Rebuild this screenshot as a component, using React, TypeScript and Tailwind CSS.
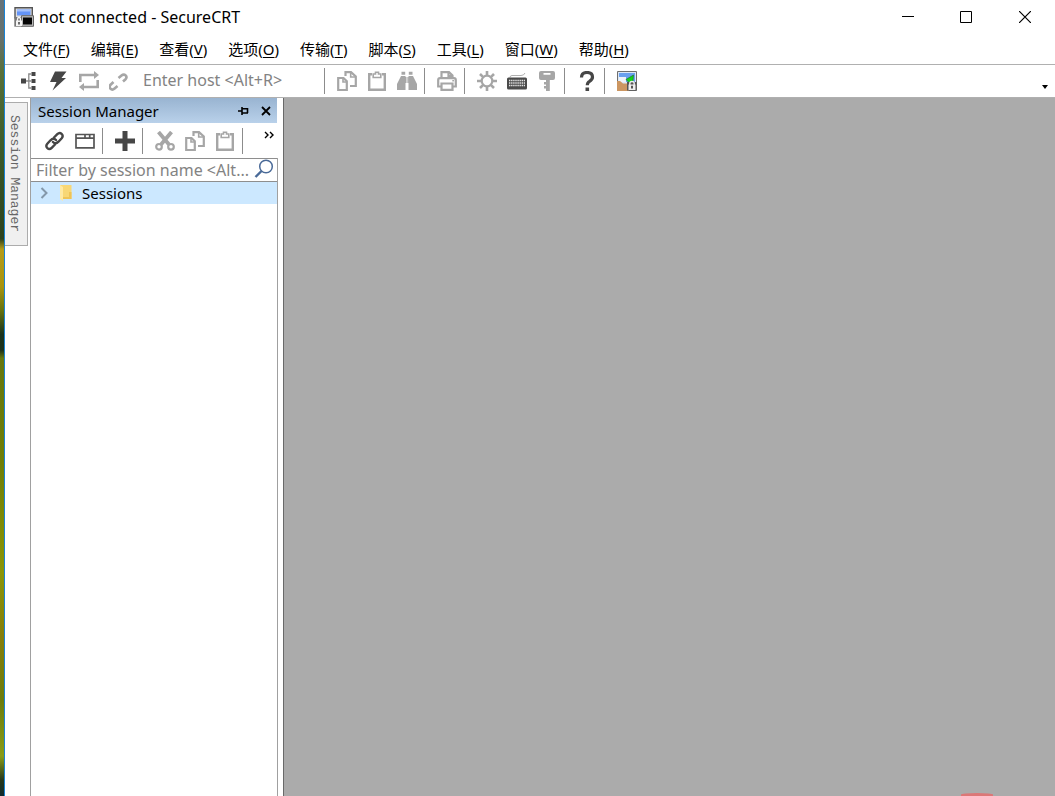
import React, { useState } from 'react'

interface ToolProps {
  label: string
  children: React.ReactNode
}

const menus = [
  { text: '文件', accel: 'F' },
  { text: '编辑', accel: 'E' },
  { text: '查看', accel: 'V' },
  { text: '选项', accel: 'O' },
  { text: '传输', accel: 'T' },
  { text: '脚本', accel: 'S' },
  { text: '工具', accel: 'L' },
  { text: '窗口', accel: 'W' },
  { text: '帮助', accel: 'H' },
]

function Tool({ label, children }: ToolProps) {
  return (
    <button type="button" aria-label={label} title={label} className="flex h-7 w-[30px] shrink-0 items-center justify-center hover:bg-sky-100">
      <svg viewBox="0 0 20 20" className="h-5 w-5">{children}</svg>
    </button>
  )
}

function Separator() {
  return <div className="ml-0.5 mr-[7px] h-[26px] w-px shrink-0 bg-[#8c8c8c]" />
}

function CopyPath() {
  return (
    <g fill="none" stroke="#a6a6a6" strokeWidth="2.200">
      <path d="M1.200 7h5.300l3.300 3.300V19H1.200z" />
      <path d="M6 7v4h4" strokeWidth="1.600" />
      <path d="M8.500 5V1.200H14l4.800 4.300V15H13" />
      <path d="M13.700 1v5H19" strokeWidth="1.600" />
    </g>
  )
}

function PastePath() {
  return (
    <g fill="none" stroke="#a6a6a6">
      <path d="M5 3.200H2.200v15.600h15.600V3.200H15" strokeWidth="2.400" />
      <path d="M6.200 6.500V3h2.300V1.200h3V3h2.300v3.500z" strokeWidth="1.600" />
    </g>
  )
}

function AppIcon() {
  return (
    <svg viewBox="0 0 20 20" className="h-5 w-5">
      <path d="M1 .7h17.300v10H1z" fill="#dcdcdc" stroke="#555" strokeWidth="1.400" />
      <path d="M3 2.500h13.500v6H3z" fill="#6494f7" />
      <path d="M3 2.500h13.500v2H3z" fill="#a5c1fa" />
      <path d="M.3 10h8v9.700h-8z" fill="#777" />
      <path d="M7.500 8.700h12v10.600h-12z" fill="#b9b9b9" stroke="#666" />
      <path d="M9 10.500h9v7H9z" fill="#050505" />
      <path d="M3.500 14v-2q0-1.500 1.500-1.500T6.500 12v2" fill="none" stroke="#f4f4f4" strokeWidth="1.300" />
      <path d="M2 13.500h6V19H2z" fill="#f4f4f4" />
      <path d="M4.300 15h1.400v2.500H4.300z" fill="#333" />
    </svg>
  )
}

function TitleBar() {
  return (
    <header className="flex h-[34px] items-center pl-[9px]">
      <AppIcon />
      <h1 className="ml-[5px] flex-1 text-base leading-5">not connected - SecureCRT</h1>
      <div className="flex">
        <button type="button" aria-label="最小化" className="flex h-8 w-[58px] items-center justify-center">
          <svg viewBox="0 0 12 12" className="h-3 w-3"><path d="M0 5.500h12" stroke="#000" shapeRendering="crispEdges" /></svg>
        </button>
        <button type="button" aria-label="最大化" className="flex h-8 w-[58px] items-center justify-center">
          <svg viewBox="0 0 12 12" className="h-3 w-3"><path d="M.5.5h11v11H.5z" fill="none" stroke="#000" /></svg>
        </button>
        <button type="button" aria-label="关闭" className="flex h-8 w-[60px] items-center justify-center">
          <svg viewBox="0 0 12 12" className="h-3 w-3"><path d="m0 0 12 12M12 0 0 12" stroke="#000" strokeWidth="1.200" /></svg>
        </button>
      </div>
    </header>
  )
}

function MenuBar() {
  return (
    <nav className="flex h-[30px] items-center gap-[21px] pl-[18px] text-[15px] leading-5">
      {menus.map((menu) => (
        <button key={menu.accel} type="button" className="whitespace-nowrap">
          {menu.text}(<span className="underline underline-offset-2">{menu.accel}</span>)
        </button>
      ))}
    </nav>
  )
}

function MainToolbar() {
  const [host, setHost] = useState('')

  return (
    <div className="flex h-[34px] items-center border-y border-[#b0b0b0] pl-[9px]">
      <Tool label="Connect">
        <path d="M2 7.500h5v5H2zM12.500 1h4v4h-4zM12.500 8h4v4h-4zM12.500 15h4v4h-4z" fill="#464646" />
        <path d="M7 10h5.500M12.500 3H9.800v14h2.700" fill="none" stroke="#8a8a8a" strokeWidth="1.300" />
      </Tool>
      <Tool label="Quick Connect">
        <path d="M6 .5h11.500L12.500 7H17L3.500 19.500 7.500 11H1z" fill="#464646" />
      </Tool>
      <Tool label="Reconnect">
        <path d="M1.300 11V4H16M18.700 9v7H4" fill="none" stroke="#a6a6a6" strokeWidth="2.600" />
        <path d="m15 0 5 4-5 4zM5 12l-5 4 5 4z" fill="#a6a6a6" />
      </Tool>
      <Tool label="Disconnect">
        <g fill="none" stroke="#a6a6a6" strokeWidth="2.600">
          <path d="M4.500 11 1.800 13.500c-3 3 .7 6.700 3.800 4L8.500 15" />
          <path d="m9.500 7 3-2.500c3-2.500 6.700 1 3.800 4L14 10.500" />
        </g>
      </Tool>
      <input
        aria-label="Enter host"
        value={host}
        onChange={(e) => setHost(e.target.value)}
        placeholder="Enter host <Alt+R>"
        className="ml-[9px] mb-0.5 h-6 w-[179px] text-base leading-5 outline-none placeholder:text-[#838383]"
      />
      <Separator />
      <Tool label="Copy"><CopyPath /></Tool>
      <Tool label="Paste"><PastePath /></Tool>
      <Tool label="Find">
        <path d="M4.500.8h3.700v3H4.500zM11.800.8h3.700v3h-3.700zM4 5h4.500v14H0v-6zM11.500 5H16l4 8v6h-8.500zM8.500 6h3v6h-3z" fill="#a6a6a6" />
        <path d="M9.500 6v6M10.700 6v6" stroke="#fff" strokeWidth=".5" />
      </Tool>
      <Separator />
      <Tool label="Print">
        <g fill="none" stroke="#a6a6a6" strokeWidth="2.200">
          <path d="M4.500 7V1.200H12l3.500 3.300V7M4 15.500H1.200V9q0-1.800 1.800-1.800h14q1.800 0 1.800 1.800v6.500H16" />
          <path d="M4.500 12.500h11v6.300h-11zM11.500 1v4h4" />
          <path d="M15.300 9.700h1.800" strokeWidth="1.500" />
        </g>
      </Tool>
      <Separator />
      <Tool label="Session Options">
        <circle cx="10" cy="10" r="5.300" fill="none" stroke="#a6a6a6" strokeWidth="2.200" />
        <path d="M10 0v4.500M10 15.500V20M0 10h4.500M15.500 10H20M3 3l3.200 3.200m7.600 7.600L17 17M3 17l3.200-3.200m7.600-7.600L17 3" stroke="#a6a6a6" strokeWidth="2.600" />
      </Tool>
      <Tool label="Keymap">
        <path d="M3 6.500Q3 4.500 5 4.500h9q3 0 4-2.500" fill="none" stroke="#b0b0b0" />
        <rect x="0" y="6.500" width="20" height="12" rx="1.500" fill="#4b4b4b" />
        <path d="M2 9.500h16M2 12h16M2 14.500h16" stroke="#e5e5e5" strokeWidth="1.500" strokeDasharray="1.400 .7" />
      </Tool>
      <Tool label="Public Key">
        <path fillRule="evenodd" d="M4 0h12q2 0 2 2v5q0 2-2 2h-3.200v11H9v-2.500H7V15h2v-1.500H7V11h2V9H4Q2 9 2 7V2q0-2 2-2zm2.500 2v1.800h7V2z" fill="#a6a6a6" />
      </Tool>
      <Separator />
      <Tool label="Help">
        <path d="M4.500 6.500q0-5 5.500-5t5.500 4.500q0 2.500-3 4.300-2.200 1.200-2.200 4" fill="none" stroke="#464646" strokeWidth="3.200" />
        <path d="M8.500 16.500h3.600V20H8.500z" fill="#464646" />
      </Tool>
      <Separator />
      <Tool label="SecureFX">
        <path d="M.5.500h19v19H.5z" fill="#dce7f5" stroke="#6f6f6f" />
        <path d="M2 2h16v9H2z" fill="#6aa0ee" />
        <path d="M2 6h7v5H2z" fill="#eef2f8" />
        <path d="M0 10h3l3 2.500h6V20H0z" fill="#cc9661" />
        <path d="M9 8.500 16.500 4l-.5 6-4 1.500z" fill="#16d41b" stroke="#176f22" strokeWidth=".6" />
        <path d="M10 11h9.500v8.500H10z" fill="#555" />
        <path d="M12.800 14v-1.500q0-2 2.200-2t2.200 2V14" fill="none" stroke="#eee" strokeWidth="1.400" />
        <path d="M11.500 13.500h7V19h-7z" fill="#eee" />
        <path d="M14 14.800h2v2.700h-2z" fill="#555" />
      </Tool>
      <button type="button" aria-label="Toolbar options" className="ml-auto mt-3 flex h-4 w-5 items-center justify-center">
        <svg viewBox="0 0 6 4" className="h-1 w-1.5"><path d="M0 0h6L3 4z" /></svg>
      </button>
    </div>
  )
}

function SessionManager() {
  const [filter, setFilter] = useState('')

  return (
    <aside className="flex w-[248px] shrink-0 flex-col border-l border-[#a0a0a0]">
      <div className="mr-px flex h-[25px] items-center bg-gradient-to-b from-[#99b4d1] to-[#b9d1ea] pl-[7px]">
        <h2 className="flex-1 text-[15px] leading-5">Session Manager</h2>
        <button type="button" aria-label="Auto Hide" className="flex h-5 w-[22px] items-center justify-center">
          <svg viewBox="0 0 12 10" className="h-2.5 w-3"><path d="M0 5h4M4 1v8M4 2.800h5.500V7M4 7h6" fill="none" stroke="#000" strokeWidth="1.600" /></svg>
        </button>
        <button type="button" aria-label="Close" className="flex h-5 w-[22px] items-center justify-center">
          <svg viewBox="0 0 10 10" className="h-2.5 w-2.5"><path d="m1 1 8 8m0-8-8 8" stroke="#000" strokeWidth="1.800" /></svg>
        </button>
      </div>

      <div className="flex h-[35px] items-center pl-[9px] pt-px">
        <Tool label="Connect">
          <g fill="none" stroke="#464646" strokeWidth="2.400" strokeLinecap="round">
            <path d="m9 6.500 3.300-3.300c3-3 7 .8 4.400 4L13.500 10.700c-2 2-4 2-5.500.3" />
            <path d="m10 13.500-3.300 3.300c-3 3-7-.8-4.400-4L5.500 9.300c2-2 4-2 5.500-.3" />
          </g>
        </Tool>
        <Tool label="Connect in Tab">
          <path d="M1 3.500h18v13.300H1zM1 7.200h9V3.500M10 7.200h9M14.700 3.500v3.700" fill="none" stroke="#555" strokeWidth="1.700" />
        </Tool>
        <Separator />
        <Tool label="New Session"><path d="M7.500 0h5v7.500H20v5h-7.500V20h-5v-7.500H0v-5h7.500z" fill="#464646" /></Tool>
        <Separator />
        <Tool label="Cut">
          <g fill="none" stroke="#a6a6a6">
            <path d="M3.500 1 14 13.500M16.500 1 6 13.500" strokeWidth="3.800" />
            <circle cx="4" cy="15.800" r="2.800" strokeWidth="2.200" />
            <circle cx="16" cy="15.800" r="2.800" strokeWidth="2.200" />
          </g>
        </Tool>
        <Tool label="Copy"><CopyPath /></Tool>
        <Tool label="Paste"><PastePath /></Tool>
        <Separator />
        <button type="button" aria-label="More" className="mb-3 ml-auto mr-[3px] flex h-4 w-3 items-center justify-center">
          <svg viewBox="0 0 11 8" className="h-2 w-[11px] shrink-0"><path d="m1 1 3 3-3 3m5-6 3 3-3 3" fill="none" stroke="#000" strokeWidth="1.400" /></svg>
        </button>
      </div>

      <div className="flex flex-1 flex-col border-r border-[#a0a0a0]">
        <div className="flex h-6 items-center border-y border-[#8e8e8e] pl-[5px] pr-[3px]">
          <input
            aria-label="Filter by session name"
            value={filter}
            onChange={(e) => setFilter(e.target.value)}
            placeholder="Filter by session name <Alt..."
            className="h-5 min-w-0 flex-1 text-base leading-5 outline-none placeholder:text-[#838383]"
          />
          <svg viewBox="0 0 20 20" className="mb-0.5 h-5 w-5 shrink-0">
            <circle cx="12" cy="7.500" r="6.300" fill="none" stroke="#4a6a98" strokeWidth="1.500" />
            <path d="m7.500 12-6 6" stroke="#4a6a98" strokeWidth="2.400" />
          </svg>
        </div>
        <button type="button" className="flex h-[22px] items-center bg-[#cce8ff] pl-[9px] text-left text-[15px] leading-5">
          <svg viewBox="0 0 8 12" className="h-3 w-2"><path d="m1.500 1 5 5-5 5" fill="none" stroke="#8498aa" strokeWidth="2" /></svg>
          <svg viewBox="0 0 14 18" className="ml-3 h-[18px] w-3.5">
            <path d="M0 1h11.500v14H0z" fill="#f8d775" />
            <path d="M9 8h2.500v7H3V13h6z" fill="#efc456" />
            <path d="m0 1 3 2v14l-3-2z" fill="#ffe9a2" />
          </svg>
          <span className="ml-2">Sessions</span>
        </button>
      </div>
    </aside>
  )
}

export default function App() {
  return (
    <div className="flex min-h-screen bg-white font-['Noto_Sans','Noto_Sans_CJK_SC',sans-serif] text-black">
      {/* Desktop showing beside the window */}
      <div className="w-1 shrink-0 bg-[linear-gradient(to_bottom,#65727a_0%,#66716c_5%,#58703a_9%,#3d5c2a_18%,#2c421e_30%,#b59b18_31.3%,#a8940f_36%,#65720e_39%,#19331e_42%,#1c321c_44%,#65770f_45%,#6f7e06_58%,#8a9508_72%,#857e0b_80%,#6c7c0b_88%,#899c18_95%,#26371a_98%,#102b2f_100%)]" />

      <div className="flex min-w-0 flex-1 flex-col border-l border-[#1883d7]">
        <TitleBar />
        <MenuBar />
        <MainToolbar />

        <div className="flex flex-1">
          <div className="flex w-[25px] shrink-0 items-start pt-1">
            <button type="button" className="flex h-36 w-[23px] items-center justify-center border border-l-0 border-[#acacac] bg-[#f0f0f0] pr-1 font-['Liberation_Mono',monospace] text-[13px] leading-4 text-[#666] [writing-mode:vertical-rl]">
              Session Manager
            </button>
          </div>
          <SessionManager />

          {/* Workspace, empty until a session is opened */}
          <main className="ml-[5px] flex flex-1 items-end justify-end overflow-hidden border-l border-[#696969] bg-[#ababab] pr-[62px]">
            <div className="h-[3px] w-8 rounded-t-[100%] bg-[#dc7777]" />
          </main>
        </div>
      </div>
    </div>
  )
}
